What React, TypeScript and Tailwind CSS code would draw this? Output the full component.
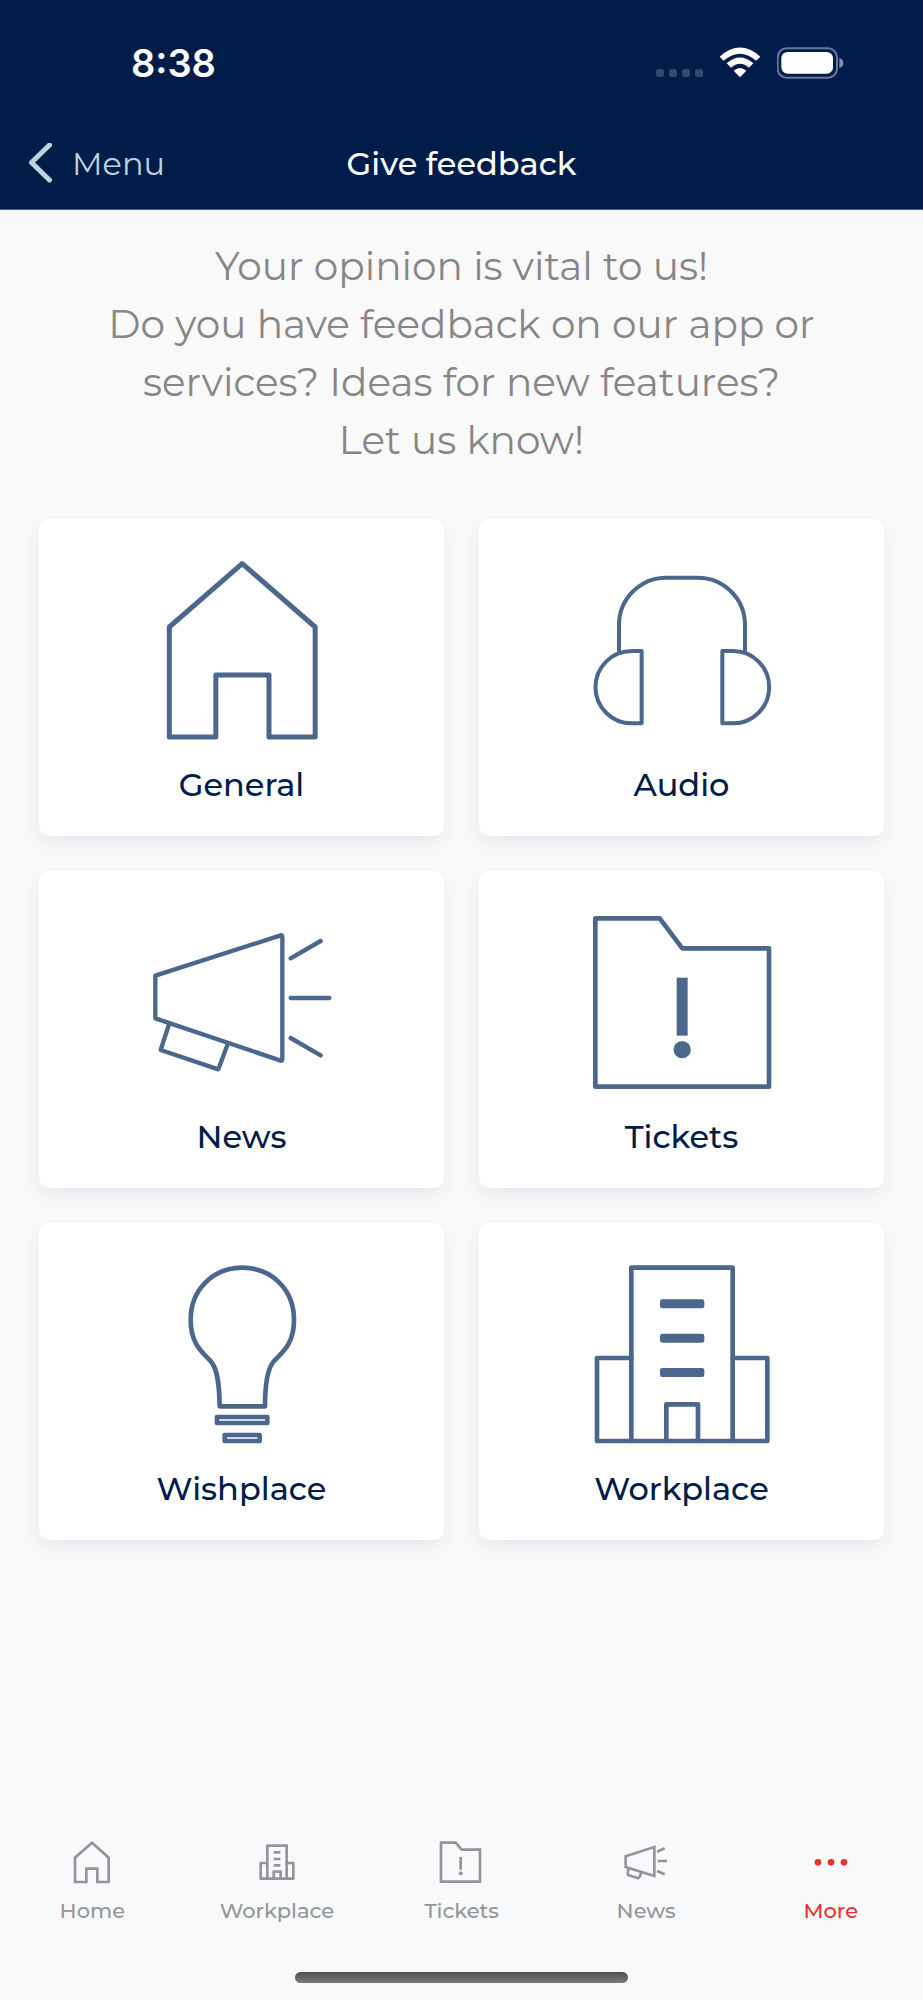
import type { ReactNode } from "react";

type Item = { label: string; icon: ReactNode };
type Tab = Item & { active?: boolean };

const cards: Item[] = [
  { label: "General", icon: <HouseIcon /> },
  { label: "Audio", icon: <HeadphonesIcon /> },
  { label: "News", icon: <MegaphoneIcon /> },
  { label: "Tickets", icon: <FolderIcon /> },
  { label: "Wishplace", icon: <BulbIcon /> },
  { label: "Workplace", icon: <BuildingIcon /> },
];

const tabs: Tab[] = [
  { label: "Home", icon: <HomeTabIcon /> },
  { label: "Workplace", icon: <WorkplaceTabIcon /> },
  { label: "Tickets", icon: <TicketsTabIcon /> },
  { label: "News", icon: <NewsTabIcon /> },
  { label: "More", icon: <MoreTabIcon />, active: true },
];

export default function App() {
  return (
    <div className="min-h-screen flex flex-col bg-[#f7f9fb] font-['Montserrat','Inter',sans-serif]">
      <header className="bg-[#001d49] border-b border-[#4d6080]">
        <StatusBar />
        <NavBar />
      </header>

      <main className="flex-1 flex flex-col px-5">
        <div className="flex-1 bg-[#f9f9f9] px-[19px] pt-[27px]">
          <p className="text-center text-[39px] leading-[58px] text-[#868686]">
            Your opinion is vital to us!
            <br />
            Do you have feedback on our app or
            <br />
            services? Ideas for new features?
            <br />
            Let us know!
          </p>
          <div className="grid grid-cols-2 gap-[35px] mt-[50px] mb-12">
            {cards.map((c) => (
              <Card key={c.label} {...c} />
            ))}
          </div>
        </div>
      </main>

      <footer className="pt-4 pb-[17px]">
        <nav className="grid grid-cols-5">
          {tabs.map((t) => (
            <TabButton key={t.label} {...t} />
          ))}
        </nav>
        <div className="mx-auto mt-[46px] h-[11px] w-[36%] rounded-full bg-linear-to-b from-[#505251] to-[#7a7c7b]" />
      </footer>
    </div>
  );
}

function StatusBar() {
  return (
    <div className="flex items-center justify-between h-[126px] pl-[131px] pr-[79px]">
      <span className="text-[38px] leading-none font-semibold text-white font-['Inter',sans-serif]">
        8:38
      </span>
      <div className="flex items-center">
        <svg className="w-12 h-8 mr-4" viewBox="0 0 48 32" fill="#334a6d" aria-hidden="true">
          <rect x="1" y="22" width="8" height="8" rx="2.5" />
          <rect x="14" y="22" width="8" height="8" rx="2.5" />
          <rect x="27" y="22" width="8" height="8" rx="2.5" />
          <rect x="40" y="22" width="8" height="8" rx="2.5" />
        </svg>
        <svg className="w-[42px] h-8 mr-4" viewBox="770 139 126 96" fill="#fff" aria-hidden="true">
          <path d="M772 168 Q833 113 894 168 L881 180 Q833 138 784 180 Z" />
          <path d="M793 188 Q833 153 873 188 L860 201 Q833 178 806 201 Z" />
          <path d="M814 210 Q833 194 852 210 L833 230 Z" />
        </svg>
        <svg className="w-[67px] h-8" viewBox="944 138 201 96" aria-hidden="true">
          <rect x="946" y="142" width="178" height="88" rx="27" fill="none" stroke="#66779a" strokeWidth="6" />
          <rect x="957" y="153" width="155" height="65" rx="19" fill="#fff" />
          <path d="M1131 171 Q1143 174 1143 186 Q1143 198 1131 201 Z" fill="#8090a8" />
        </svg>
      </div>
    </div>
  );
}

function NavBar() {
  return (
    <div className="grid grid-cols-[1fr_auto_1fr] items-center h-[83px] pb-2 px-7">
      <button type="button" className="flex items-center gap-5 text-[32px] leading-10 text-[#bfd2e0]">
        <svg
          className="w-6 h-[42px]"
          viewBox="0 0 24 42"
          fill="none"
          stroke="currentColor"
          strokeWidth="5"
          strokeLinecap="round"
          strokeLinejoin="round"
          aria-hidden="true"
        >
          <path d="M21.5 2 L3.5 19.5 L21.5 37" />
        </svg>
        Menu
      </button>
      <h1 className="text-[32px] leading-10 font-medium text-white">Give feedback</h1>
    </div>
  );
}

function Card({ label, icon }: Item) {
  return (
    <button
      type="button"
      className="flex flex-col items-center rounded-[10px] bg-white pt-[42px] pb-[30px] shadow-[0_8px_20px_rgba(0,60,110,0.08)]"
    >
      {icon}
      <span className="mt-[25px] text-[32px] leading-[42px] font-medium text-[#001d49]">{label}</span>
    </button>
  );
}

function TabButton({ label, icon, active }: Tab) {
  return (
    <button
      type="button"
      aria-current={active ? "page" : undefined}
      className={`flex flex-col items-center ${active ? "text-[#e8312f]" : "text-[#939598]"}`}
    >
      {icon}
      <span className="mt-3 text-[21px] leading-[30px] font-medium">{label}</span>
    </button>
  );
}

function CardIcon({ viewBox, children }: { viewBox: string; children: ReactNode }) {
  return (
    <svg
      className="w-[178px] h-[178px] overflow-visible"
      viewBox={viewBox}
      fill="none"
      stroke="#4c678d"
      strokeWidth="14"
      strokeLinecap="round"
      strokeLinejoin="round"
      aria-hidden="true"
    >
      {children}
    </svg>
  );
}

function HouseIcon() {
  return (
    <CardIcon viewBox="397 183 534 534">
      <path d="M664.5 191 L883.5 381 V711 H745 V525 H585.5 V711 H446 V381 Z" strokeWidth="15" />
    </CardIcon>
  );
}

function HeadphonesIcon() {
  return (
    <CardIcon viewBox="397 183 534 534">
      <g strokeWidth="12">
        <path d="M475 455 V375 A142 142 0 0 1 617 233 H711 A142 142 0 0 1 853 375 V455" strokeLinecap="butt" />
        <path d="M543 453 H513 A108.5 108.5 0 0 0 513 670 H543 Z" />
        <path d="M785 453 H817 A108.5 108.5 0 0 1 817 670 H785 Z" />
      </g>
    </CardIcon>
  );
}

function MegaphoneIcon() {
  return (
    <CardIcon viewBox="397 189 534 534">
      <g strokeWidth="13">
        <path d="M404 377 L780 256 Q785 255 785 260 V628 Q785 633 780 632 L404 505 Z" />
        <path d="M445 523 L420 600 L593 658 L621 583" strokeLinecap="butt" />
        <path d="M810 325 L900 273 M810 444 H926 M810 564 L900 616" />
      </g>
    </CardIcon>
  );
}

function FolderIcon() {
  return (
    <CardIcon viewBox="397 189 534 534">
      <path d="M404 205 H597 L665 295 H925 V710 H404 Z" />
      <path d="M664.5 383 V557" strokeWidth="33" strokeLinecap="butt" />
      <circle cx="664.5" cy="599" r="26" fill="#4c678d" stroke="none" />
    </CardIcon>
  );
}

function BulbIcon() {
  return (
    <CardIcon viewBox="397 195 534 534">
      <path d="M597 619 C596 560 592 512 573 487 C553 461 510 440 510 359 C510 268 578 203 665 203 C752 203 820 268 820 359 C820 440 777 461 757 487 C738 512 733 560 733 619 Z" />
      <rect x="589" y="651" width="151" height="18" />
      <rect x="612" y="705" width="105" height="18" />
    </CardIcon>
  );
}

function BuildingIcon() {
  return (
    <CardIcon viewBox="397 195 534 534">
      <path d="M512 723 V203 H816 V723" />
      <path d="M512 474 H409 V723 H920 V474 H816" />
      <path d="M617 723 V613 H712 V723" />
      <g fill="#4c678d" stroke="none">
        <rect x="598" y="298" width="133" height="27" rx="7" />
        <rect x="598" y="401" width="133" height="27" rx="7" />
        <rect x="598" y="504" width="133" height="27" rx="7" />
      </g>
    </CardIcon>
  );
}

function TabIcon({ viewBox, children }: { viewBox: string; children: ReactNode }) {
  return (
    <svg
      className="w-11 h-11"
      viewBox={viewBox}
      fill="none"
      stroke="currentColor"
      strokeWidth="8"
      aria-hidden="true"
    >
      {children}
    </svg>
  );
}

function HomeTabIcon() {
  return (
    <TabIcon viewBox="210 149 132 132">
      <path d="M276 157 L326 202 V275 H292 V235 H259 V275 H225 V202 Z" />
    </TabIcon>
  );
}

function WorkplaceTabIcon() {
  return (
    <TabIcon viewBox="765 149 132 132">
      <g strokeLinejoin="round">
        <path d="M802 265 V166 H860 V265" />
        <path d="M802 218 H782 V265 H880 V218 H860" />
        <path d="M821 265 V244 H842 V265" />
        <path d="M821 186 H841 M821 206 H841 M821 225 H841" />
      </g>
    </TabIcon>
  );
}

function TicketsTabIcon() {
  return (
    <TabIcon viewBox="1318 149 132 132">
      <path d="M1324 157 H1368 L1386 178 H1441 V274 H1324 Z" />
      <path d="M1383 200 V238" />
      <circle cx="1383" cy="249" r="6" fill="currentColor" stroke="none" />
    </TabIcon>
  );
}

function NewsTabIcon() {
  return (
    <TabIcon viewBox="488 149 132 132">
      <path d="M493 198 L579 170 V257 L493 230 Z" />
      <path d="M502 233 L499 249 Q498 254 503 255 L528 263 Q533 264 535 259 L540 246" />
      <path d="M587 184 L610 174 M589 212 H617 M587 242 L610 252" />
    </TabIcon>
  );
}

function MoreTabIcon() {
  return (
    <TabIcon viewBox="1042 149 132 132">
      <g fill="currentColor" stroke="none">
        <circle cx="1069" cy="216" r="10" />
        <circle cx="1108" cy="216" r="10" />
        <circle cx="1147" cy="216" r="10" />
      </g>
    </TabIcon>
  );
}
